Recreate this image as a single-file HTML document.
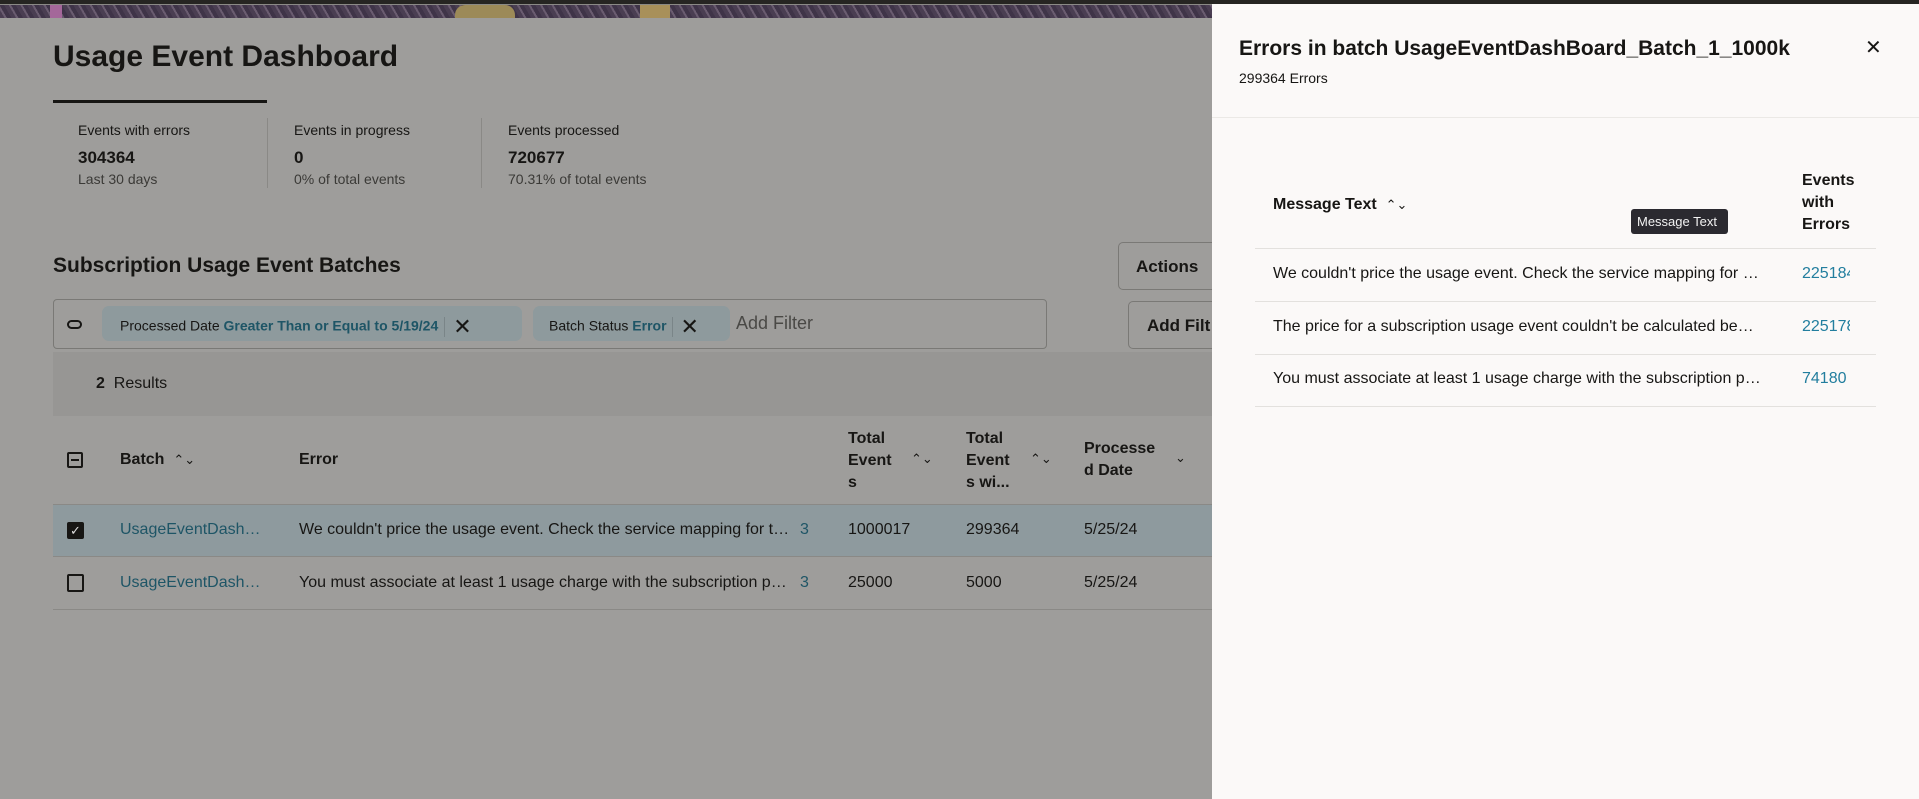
<!DOCTYPE html>
<html><head><meta charset="utf-8"><style>
*{box-sizing:border-box;margin:0;padding:0}
body{width:1919px;height:799px;overflow:hidden;background:#9e9d9b;font-family:"Liberation Sans",sans-serif;color:#171614;position:relative}
.abs{position:absolute;white-space:nowrap}
.link{color:#1e5566}
.plink{color:#227e9e}
.cell{overflow:hidden;text-overflow:ellipsis}
</style></head><body>
<div class="abs" style="left:0;top:0;width:1919px;height:4px;background:#262522"></div>
<div class="abs" style="left:0;top:4px;width:1919px;height:1px;background:#8b8a86"></div>
<div class="abs" style="left:0;top:5px;width:1212px;height:13px;background:repeating-linear-gradient(60deg,#4a3e52 0 4px,#6a5c70 4px 6px,#3f3448 6px 10px);"></div>
<div class="abs" style="left:50px;top:5px;width:12px;height:13px;background:#a4679a"></div>
<div class="abs" style="left:455px;top:5px;width:60px;height:13px;background:#9c8a58;border-radius:10px 10px 0 0"></div>
<div class="abs" style="left:640px;top:5px;width:30px;height:13px;background:#a8905a"></div>

<div class="abs" style="left:53px;top:40px;font-size:30px;font-weight:bold">Usage Event Dashboard</div>
<div class="abs" style="left:53px;top:100px;width:214px;height:3px;background:#171614"></div>

<div class="abs" style="left:78px;top:122px;font-size:14px">Events with errors</div>
<div class="abs" style="left:78px;top:148px;font-size:17px;font-weight:bold">304364</div>
<div class="abs" style="left:78px;top:171px;font-size:14px;color:#3b3a37">Last 30 days</div>
<div class="abs" style="left:267px;top:118px;width:1px;height:70px;background:#8a8986"></div>
<div class="abs" style="left:294px;top:122px;font-size:14px">Events in progress</div>
<div class="abs" style="left:294px;top:148px;font-size:17px;font-weight:bold">0</div>
<div class="abs" style="left:294px;top:171px;font-size:14px;color:#3b3a37">0% of total events</div>
<div class="abs" style="left:481px;top:118px;width:1px;height:70px;background:#8a8986"></div>
<div class="abs" style="left:508px;top:122px;font-size:14px">Events processed</div>
<div class="abs" style="left:508px;top:148px;font-size:17px;font-weight:bold">720677</div>
<div class="abs" style="left:508px;top:171px;font-size:14px;color:#3b3a37">70.31% of total events</div>

<div class="abs" style="left:53px;top:254px;font-size:21px;font-weight:bold">Subscription Usage Event Batches</div>
<div class="abs" style="left:1118px;top:242px;width:120px;height:48px;border:1px solid #7a7976;border-radius:5px;font-size:17px;font-weight:bold;padding:14px 0 0 17px">Actions</div>
<div class="abs" style="left:1128px;top:301px;width:120px;height:48px;border:1px solid #7a7976;border-radius:5px;font-size:17px;font-weight:bold;padding:14px 0 0 18px">Add Filt</div>

<div class="abs" style="left:53px;top:299px;width:994px;height:50px;border:1px solid #7a7976;border-radius:4px"></div>
<div class="abs" style="left:67px;top:320px;width:15px;height:9px;border:2px solid #171614;border-radius:5px"></div>
<div class="abs" style="left:102px;top:306px;width:420px;height:35px;background:#8e9a9d;border-radius:7px;font-size:14px;padding:8px 0 0 18px">Processed Date <span class="link" style="font-weight:bold">Greater Than or Equal to 5/19/24</span><span style="display:inline-block;width:1px;height:20px;background:#7a8588;vertical-align:middle;margin:0 8px 0 6px"></span><span style="font-size:22px;vertical-align:middle">✕</span></div>
<div class="abs" style="left:533px;top:306px;width:197px;height:35px;background:#8e9a9d;border-radius:7px;font-size:14px;padding:8px 0 0 16px">Batch Status <span class="link" style="font-weight:bold">Error</span><span style="display:inline-block;width:1px;height:20px;background:#7a8588;vertical-align:middle;margin:0 8px 0 5px"></span><span style="font-size:22px;vertical-align:middle">✕</span></div>
<div class="abs" style="left:736px;top:313px;font-size:18px;color:#4a4946">Add Filter</div>

<div class="abs" style="left:53px;top:352px;width:1159px;height:64px;background:#979694"></div>
<div class="abs" style="left:96px;top:375px;font-size:16px"><b>2</b>&nbsp;&nbsp;Results</div>

<div class="abs" style="left:67px;top:452px;width:16px;height:16px;border:2px solid #171614;border-radius:2px"><div style="margin:5px 2px;height:2px;background:#171614"></div></div>
<div class="abs" style="left:120px;top:451px;font-size:16px;font-weight:bold">Batch &nbsp;<span style="font-weight:normal;font-size:13px">⌃⌄</span></div>
<div class="abs" style="left:299px;top:451px;font-size:16px;font-weight:bold">Error</div>
<div class="abs" style="left:848px;top:428px;font-size:16px;font-weight:bold;line-height:22px;white-space:normal">Total<br>Event<br>s</div>
<div class="abs" style="left:911px;top:451px;font-size:13px">⌃⌄</div>
<div class="abs" style="left:966px;top:428px;font-size:16px;font-weight:bold;line-height:22px">Total<br>Event<br>s wi...</div>
<div class="abs" style="left:1030px;top:451px;font-size:13px">⌃⌄</div>
<div class="abs" style="left:1084px;top:438px;font-size:16px;font-weight:bold;line-height:22px">Processe<br>d Date</div>
<div class="abs" style="left:1175px;top:450px;font-size:13px">⌄</div>

<div class="abs" style="left:53px;top:504px;width:1159px;height:53px;background:#8e9a9e;border-top:1px solid #8a8986;border-bottom:1px solid #8a8986"></div>
<div class="abs" style="left:67px;top:522px;width:17px;height:17px;background:#171614;border-radius:2px;color:#ddd;font-size:13px;text-align:center;line-height:17px">✓</div>
<div class="abs cell link" style="left:120px;top:521px;width:143px;font-size:16px">UsageEventDashBoard</div>
<div class="abs cell" style="left:299px;top:521px;width:492px;font-size:16px">We couldn't price the usage event. Check the service mapping for this</div>
<div class="abs link" style="left:800px;top:521px;font-size:16px">3</div>
<div class="abs" style="left:848px;top:521px;font-size:16px">1000017</div>
<div class="abs" style="left:966px;top:521px;font-size:16px">299364</div>
<div class="abs" style="left:1084px;top:521px;font-size:16px">5/25/24</div>

<div class="abs" style="left:53px;top:609px;width:1159px;height:1px;background:#8a8986"></div>
<div class="abs" style="left:67px;top:574px;width:17px;height:18px;border:2px solid #171614;border-radius:2px"></div>
<div class="abs cell link" style="left:120px;top:574px;width:143px;font-size:16px">UsageEventDashBoard</div>
<div class="abs cell" style="left:299px;top:574px;width:492px;font-size:16px">You must associate at least 1 usage charge with the subscription product</div>
<div class="abs link" style="left:800px;top:574px;font-size:16px">3</div>
<div class="abs" style="left:848px;top:574px;font-size:16px">25000</div>
<div class="abs" style="left:966px;top:574px;font-size:16px">5000</div>
<div class="abs" style="left:1084px;top:574px;font-size:16px">5/25/24</div>

<!-- panel -->
<div class="abs" style="left:1212px;top:4px;width:707px;height:795px;background:#fbf9f8"></div>
<div class="abs" style="left:1212px;top:117px;width:707px;height:1px;background:#ebe9e6"></div>
<div class="abs" style="left:1239px;top:37px;font-size:21px;font-weight:bold">Errors in batch UsageEventDashBoard_Batch_1_1000k</div>
<div class="abs" style="left:1239px;top:70px;font-size:14px">299364 Errors</div>
<div class="abs" style="left:1865px;top:35px;font-size:20px">✕</div>

<div class="abs" style="left:1273px;top:196px;font-size:16px;font-weight:bold">Message Text &nbsp;<span style="font-weight:normal;font-size:13px">⌃⌄</span></div>
<div class="abs" style="left:1802px;top:170px;font-size:16px;font-weight:bold;line-height:22px">Events<br>with<br>Errors</div>
<div class="abs" style="left:1631px;top:209px;width:97px;height:25px;background:#2b2a30;border-radius:3px;color:#f2f2f2;font-size:13px;padding:5px 0 0 6px">Message Text</div>

<div class="abs" style="left:1255px;top:248px;width:621px;height:1px;background:#e3e1de"></div>
<div class="abs cell" style="left:1273px;top:265px;width:488px;font-size:16px">We couldn't price the usage event. Check the service mapping for this usage event</div>
<div class="abs cell plink" style="left:1802px;top:265px;width:48px;font-size:16px;text-overflow:clip">225184</div>
<div class="abs" style="left:1255px;top:301px;width:621px;height:1px;background:#e3e1de"></div>
<div class="abs cell" style="left:1273px;top:318px;width:488px;font-size:16px">The price for a subscription usage event couldn't be calculated because</div>
<div class="abs cell plink" style="left:1802px;top:318px;width:48px;font-size:16px;text-overflow:clip">225178</div>
<div class="abs" style="left:1255px;top:354px;width:621px;height:1px;background:#e3e1de"></div>
<div class="abs cell" style="left:1273px;top:370px;width:488px;font-size:16px">You must associate at least 1 usage charge with the subscription product</div>
<div class="abs plink" style="left:1802px;top:370px;font-size:16px">74180</div>
<div class="abs" style="left:1255px;top:406px;width:621px;height:1px;background:#e3e1de"></div>
</body></html>
